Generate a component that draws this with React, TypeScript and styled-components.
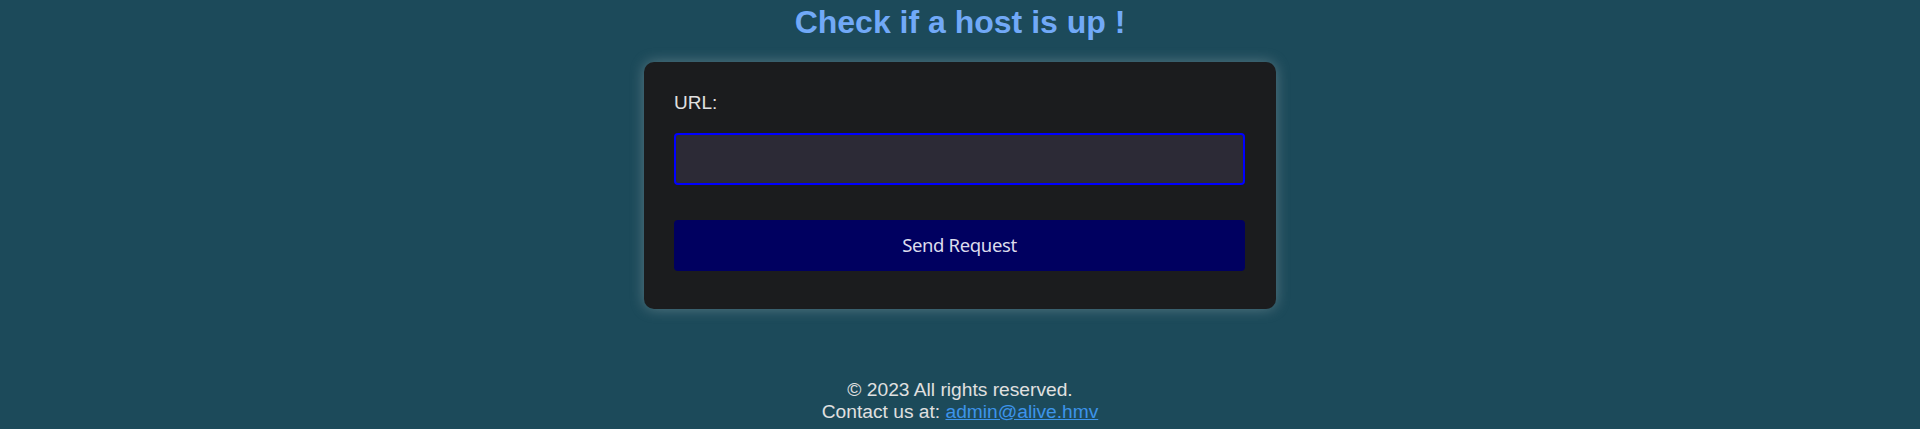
import React from "react";
import styled, { createGlobalStyle } from "styled-components";

const Global = createGlobalStyle`
  html, body {
    margin: 0;
    padding: 0;
    background: #1c4a5a;
    font-family: "Liberation Sans", Arial, sans-serif;
  }
`;

const Page = styled.div`
  display: flex;
  flex-direction: column;
  align-items: center;
  padding-top: 4px;
`;

const Title = styled.h1`
  margin: 0 0 21px;
  font-size: 32px;
  font-weight: 700;
  color: #71a9f7;
  text-align: center;
  line-height: normal;
`;

const Card = styled.form`
  box-sizing: border-box;
  width: 632px;
  padding: 30px 31px 38px 30px;
  background: #1b1c1e;
  border-radius: 10px;
  box-shadow: 0 0 14px rgba(200, 210, 210, 0.35);
  display: flex;
  flex-direction: column;
`;

const Label = styled.label`
  font-size: 19px;
  color: #e0e0e0;
  line-height: 22px;
  margin-bottom: 19px;
`;

const Input = styled.input`
  box-sizing: border-box;
  width: 100%;
  height: 52px;
  background: #2c2a36;
  border: 2px solid #0000ff;
  border-radius: 4px;
  outline: none;
  color: #ddd;
  font-size: 16px;
  padding: 0 10px;
  margin: 0 0 35px;
`;

const Button = styled.button`
  box-sizing: border-box;
  width: 100%;
  height: 51px;
  background: #000060;
  border: none;
  border-radius: 4px;
  color: #dcdcec;
  font-family: "Noto Sans", sans-serif;
  font-size: 18.5px;
  letter-spacing: -0.35px;
  display: flex;
  align-items: center;
  justify-content: center;
  padding: 0 0 2px;
  margin: 0;
  cursor: pointer;
`;

const Footer = styled.footer`
  margin-top: 70px;
  text-align: center;
  color: #e0e0e0;
  font-size: 19.2px;
  line-height: normal;
`;

const Line = styled.div``;

const Link = styled.a`
  color: #3d94ea;
  text-decoration: underline;
`;

export default function App() {
  return (
    <>
      <Global />
      <Page>
        <Title>Check if a host is up !</Title>
        <Card onSubmit={(e) => e.preventDefault()}>
          <Label htmlFor="url">URL:</Label>
          <Input id="url" type="text" />
          <Button type="submit">Send Request</Button>
        </Card>
        <Footer>
          <Line>© 2023 All rights reserved.</Line>
          <Line>
            Contact us at: <Link href="mailto:admin@alive.hmv">admin@alive.hmv</Link>
          </Line>
        </Footer>
      </Page>
    </>
  );
}
